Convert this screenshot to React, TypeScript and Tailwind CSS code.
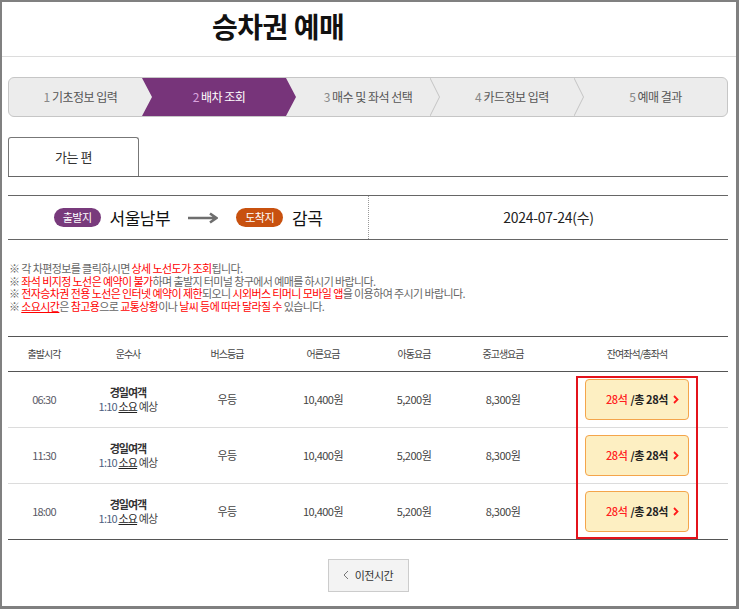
import React from "react";

const F = "[font-family:'Noto_Sans_CJK_KR','Noto_Sans',sans-serif]";

function Sep() {
  return (
    <svg className="absolute right-0 top-0 h-full w-[10px]" viewBox="0 0 10 38" preserveAspectRatio="none">
      <polyline points="0,0 9.5,19 0,38" fill="none" stroke="#c4c4c4" strokeWidth="1" />
    </svg>
  );
}

function StepText({ n, t, active }: { n: string; t: string; active?: boolean }) {
  return (
    <span className="text-[12px] tracking-[-0.5px] whitespace-nowrap">
      <span className={active ? "text-[#d9a3de]" : "text-[#888]"}>{n}</span>{" "}
      <span className={active ? "text-white" : "text-[#555]"}>{t}</span>
    </span>
  );
}

const rows = ["06:30", "11:30", "18:00"];

export default function App() {
  return (
    <div className={`${F} w-[739px] h-[609px] box-border border-l-2 border-t-2 border-r-[3px] border-b-[3px] border-[#808080] bg-white overflow-hidden`}>
      {/* title */}
      <div className="h-[55px] border-b border-[#dcdcdc] flex items-center pl-[210px] pb-[6px]">
        <h1 className="text-[28px] font-bold tracking-[-0.5px] text-[#111]">승차권 예매</h1>
      </div>

      <div className="pl-[6px] pt-[20px] w-[726px]">
        {/* steps */}
        <div className="flex h-[40px] w-[720px] rounded-[6px] border border-[#c6c6c6] bg-[#ececec] overflow-hidden">
          <div className="relative w-[143px] flex items-center justify-center">
            <StepText n="1" t="기초정보 입력" />
          </div>
          <div className="relative z-10 -ml-[10px] w-[154px] flex items-center justify-center bg-[#77347a] [clip-path:polygon(0_0,calc(100%_-_10px)_0,100%_50%,calc(100%_-_10px)_100%,0_100%,10px_50%)]">
            <StepText n="2" t="배차 조회" active />
          </div>
          <div className="relative w-[144px] flex items-center justify-center">
            <StepText n="3" t="매수 및 좌석 선택" />
            <Sep />
          </div>
          <div className="relative w-[144px] flex items-center justify-center">
            <StepText n="4" t="카드정보 입력" />
            <Sep />
          </div>
          <div className="relative flex-1 flex items-center justify-center">
            <StepText n="5" t="예매 결과" />
          </div>
        </div>

        {/* tab */}
        <div className="mt-[20px] w-[720px] border-b border-[#666]">
          <div className="w-[131px] h-[39px] border border-b-0 border-[#777] rounded-t-[3px] flex items-center justify-center text-[13px] tracking-[-0.5px] text-[#333]">
            가는 편
          </div>
        </div>

        {/* route */}
        <div className="mt-[18px] w-[720px] h-[45px] border-y border-[#666] flex">
          <div className="w-[360px] flex items-center justify-center">
            <span className="h-[19px] px-[9px] rounded-full bg-[#783a7c] text-white text-[11px] tracking-[-0.5px] flex items-center">출발지</span>
            <span className="ml-[9px] text-[17px] tracking-[-0.5px] text-[#111]">서울남부</span>
            <svg className="mx-[18px]" width="30" height="12" viewBox="0 0 30 12">
              <path d="M0 6 H28 M22 1.5 L28.5 6 L22 10.5" fill="none" stroke="#6e6e6e" strokeWidth="2.6" />
            </svg>
            <span className="h-[19px] px-[9px] rounded-full bg-[#c8510f] text-white text-[11px] tracking-[-0.5px] flex items-center">도착지</span>
            <span className="ml-[9px] text-[17px] tracking-[-0.5px] text-[#111]">감곡</span>
          </div>
          <div className="flex-1 border-l border-dotted border-[#999] flex items-center justify-center text-[14px] tracking-[-0.3px] text-[#222]">
            2024-07-24(수)
          </div>
        </div>

        {/* notes */}
        <div className="mt-[22px] pl-[1px] text-[11px] leading-[12.7px] tracking-[-0.6px] text-[#666]">
          <p>※ 각 차편정보를 클릭하시면 <span className="text-[#ff0000]">상세 노선도가 조회</span>됩니다.</p>
          <p>※ <span className="text-[#ff0000]">좌석 비지정 노선은 예약이 불가</span>하며 출발지 터미널 창구에서 예매를 하시기 바랍니다.</p>
          <p>※ <span className="text-[#ff0000]">전자승차권 전용 노선은 인터넷 예약이 제한</span>되오니 <span className="text-[#ff0000]">시외버스 티머니 모바일 앱</span>을 이용하여 주시기 바랍니다.</p>
          <p>※ <span className="text-[#ff0000] underline">소요시간</span>은 <span className="text-[#ff0000]">참고용</span>으로 <span className="text-[#ff0000]">교통상황</span>이나 <span className="text-[#ff0000]">날씨 등에 따라 달라질 수</span> 있습니다.</p>
        </div>

        {/* table */}
        <div className="mt-[23px] w-[720px] border-t border-[#555]">
          <div className="grid grid-cols-[72px_96px_102px_90px_92px_86px_1fr] h-[35px] items-center text-center text-[10px] tracking-[-1px] text-[#444] border-b border-[#555]">
            <span>출발시각</span>
            <span>운수사</span>
            <span>버스등급</span>
            <span>어른요금</span>
            <span>아동요금</span>
            <span>중고생요금</span>
            <span>잔여좌석/총좌석</span>
          </div>
          <div className="relative border-b border-[#555]">
            {rows.map((t, i) => (
              <div
                key={t}
                className={`grid grid-cols-[72px_96px_102px_90px_92px_86px_1fr] items-center text-center text-[11px] tracking-[-0.5px] text-[#444] ${i < 2 ? "h-[56px] border-b border-[#dcdcdc]" : "h-[55px]"}`}
              >
                <span className="text-[#5a5a66] tracking-[-0.8px]">{t}</span>
                <div className="flex flex-col items-center leading-[14px]">
                  <span className="font-bold text-[#333] tracking-[-1px]">경일여객</span>
                  <span className="tracking-[-0.8px]">
                    <span className="text-[#4e5f80]">1:10</span> <span className="underline text-[#222]">소요</span> 예상
                  </span>
                </div>
                <span>우등</span>
                <span>10,400원</span>
                <span>5,200원</span>
                <span>8,300원</span>
                <div className="flex justify-center">
                  <button className="w-[104px] h-[41px] rounded-[4px] border border-[#f4a54b] bg-[#fdefc2] flex items-center justify-end pr-[9px] text-[11px] font-bold tracking-[-0.4px]">
                    <span className="text-[#ff2020] font-medium">28석</span>
                    <span className="ml-[3px] text-[#222]">/총 28석</span>
                    <svg className="ml-[5px]" width="6" height="9" viewBox="0 0 6 9">
                      <path d="M1 1 L4.5 4.5 L1 8" fill="none" stroke="#ff1a1a" strokeWidth="1.8" />
                    </svg>
                  </button>
                </div>
              </div>
            ))}
            <div className="absolute left-[568px] top-[4px] w-[122px] bottom-0 border-2 border-[#e3131b] pointer-events-none" />
          </div>
        </div>

        {/* prev button */}
        <div className="mt-[19px] w-[720px] flex justify-center">
          <button className="w-[81px] h-[33px] border border-[#cccccc] bg-[#f3f3f3] flex items-center justify-center gap-[6px] text-[11px] tracking-[-0.5px] text-[#333]">
            <svg width="6" height="10" viewBox="0 0 6 10">
              <path d="M5 1 L1 5 L5 9" fill="none" stroke="#777" strokeWidth="1" />
            </svg>
            이전시간
          </button>
        </div>
      </div>
    </div>
  );
}
